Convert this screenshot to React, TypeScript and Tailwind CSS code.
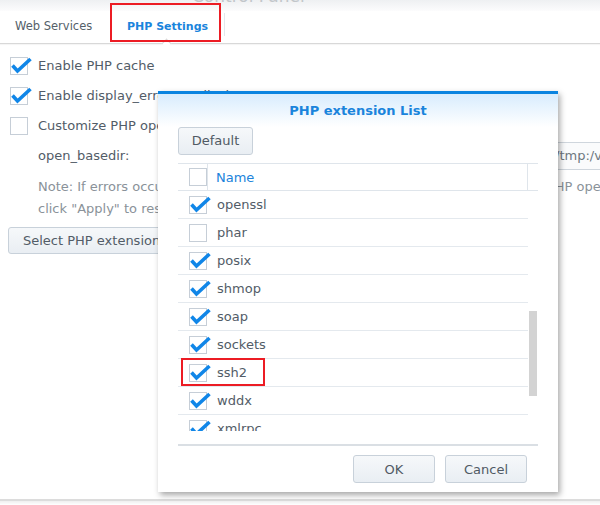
import React from "react";

function Check({ checked }: { checked: boolean }) {
  return (
    <div className="relative w-[18px] h-[18px] border border-[#c6ced7] bg-white shrink-0">
      {checked && (
        <svg
          className="absolute left-[-1px] top-[-1px] overflow-visible"
          width="20"
          height="20"
          viewBox="0 0 20 20"
        >
          <path d="M2.5 8.5 L7.5 14 L20.5 2" fill="none" stroke="#1086e8" strokeWidth="3.6" strokeLinejoin="miter" />
        </svg>
      )}
    </div>
  );
}

const rows: [string, boolean][] = [
  ["openssl", true],
  ["phar", false],
  ["posix", true],
  ["shmop", true],
  ["soap", true],
  ["sockets", true],
  ["ssh2", true],
  ["wddx", true],
  ["xmlrpc", true],
];

function Btn({ children, className = "" }: { children: React.ReactNode; className?: string }) {
  return (
    <div
      className={
        "flex items-center justify-center h-[28px] rounded-[3px] border border-[#c8d1da] bg-gradient-to-b from-[#f6f8fa] to-[#e9eef3] text-[#505a64] text-[13px] " +
        className
      }
    >
      {children}
    </div>
  );
}

export default function App() {
  return (
    <div className="relative w-[600px] h-[505px] bg-white overflow-hidden flex flex-col font-['DejaVu_Sans',sans-serif] text-[13px] text-[#525c67]">
      {/* top strip */}
      <div className="h-[11px] overflow-hidden bg-gradient-to-b from-[#eef0f2] to-[#fcfcfd] shrink-0">
        <div className="pl-[192px] -mt-[14px] text-[17px] text-[#c2c6ca] leading-[20px]">Control Panel</div>
      </div>

      {/* tab bar */}
      <div className="h-[33px] flex border-b border-[#d8d8d8] shadow-[0_1px_1px_rgba(0,0,0,0.04)] shrink-0">
        <div className="w-[110px] pl-[15px] flex items-center text-[11.5px] text-[#555f69]">Web Services</div>
        <div className="relative w-[114px] pl-[17px] flex items-center text-[11px] font-bold text-[#1a84dc]">
          PHP Settings
          <div className="absolute left-[53px] bottom-[-4px] w-[7px] h-[7px] rotate-45 border-l border-t border-[#d8d8d8] bg-white" />
        </div>
        <div className="mt-[2px] mb-[7px] border-l border-[#e2e7ec]" />
      </div>

      {/* content */}
      <div className="pl-[10px] pt-[7px] flex flex-col">
        <div className="h-[30px] flex items-center gap-[10px]">
          <Check checked />
          <span>Enable PHP cache</span>
        </div>
        <div className="h-[30px] flex items-center gap-[10px]">
          <Check checked />
          <span className="whitespace-nowrap">Enable display_errors to display PHP error messages</span>
        </div>
        <div className="h-[30px] flex items-center gap-[10px]">
          <Check checked={false} />
          <span className="whitespace-nowrap">Customize PHP open_basedir</span>
        </div>
        <div className="mt-[1px] h-[28px] flex items-center pl-[28px]">
          <span className="w-[510px] shrink-0">open_basedir:</span>
          <div className="flex-1 h-[28px] border border-[#cfd6dd] border-r-0 bg-[#fafbfc] flex items-center pl-[6px] whitespace-nowrap overflow-hidden text-[#6d7780]">
            /tmp:/var/services/web
          </div>
        </div>
        <div className="mt-[6px] pl-[28px] flex leading-[22px] text-[#8a9299] whitespace-nowrap">
          <span className="w-[509px] shrink-0 overflow-hidden">Note: If errors occur after customizing the settings, please modify the</span>
          <span>PHP open_basedir</span>
        </div>
        <div className="pl-[28px] leading-[22px] text-[#8a9299] whitespace-nowrap">click "Apply" to restore the default settings.</div>
        <div className="mt-[7px] -ml-[2px] h-[27px] self-start flex items-center px-[14px] rounded-[3px] border border-[#c8d1da] bg-gradient-to-b from-[#f6f8fa] to-[#e9eef3] whitespace-nowrap">
          Select PHP extension
        </div>
      </div>

      <div className="flex-1" />
      <div className="h-[6px] border-t-2 border-[#dcdcdc] bg-gradient-to-b from-[#efefef] to-white shrink-0" />

      {/* red box around tab */}
      <div className="absolute left-[110px] top-[3px] w-[111px] h-[39px] border-2 border-[#ec1c24]" />

      {/* dialog */}
      <div className="absolute left-[158px] top-[91px] w-[400px] h-[401px] bg-white border-t-[3px] border-[#0a84e0] shadow-[2px_3px_6px_rgba(0,0,0,0.35)] flex flex-col">
        <div className="h-[33px] shrink-0 bg-gradient-to-b from-[#d8ecfd] to-white flex items-center justify-center font-bold text-[13px] text-[#1a84dc]">
          PHP extension List
        </div>
        <div className="pl-[20px] shrink-0">
          <Btn className="w-[75px]">Default</Btn>
        </div>
        <div className="mt-[8px] ml-[20px] w-[360px] flex flex-col">
          <div className="h-[28px] flex border-t border-b border-[#dfe5eb]">
            <div className="w-[30px] pl-[11px] flex items-center border-r border-[#dfe5eb]">
              <Check checked={false} />
            </div>
            <div className="w-[320px] pl-[8px] pt-[2px] flex items-center text-[#2083db] border-r border-[#dfe5eb]">Name</div>
          </div>
          <div className="h-[240px] flex overflow-hidden">
            <div className="w-[350px] flex flex-col">
              {rows.map(([n, c]) => (
                <div key={n} className="h-[28px] shrink-0 flex items-center border-b border-[#e4e9ee]">
                  <div className="w-[30px] pl-[11px] flex items-center">
                    <Check checked={c} />
                  </div>
                  <span className="pl-[9px]">{n}</span>
                </div>
              ))}
            </div>
            <div className="w-[10px] pl-[1px] pt-[120px]">
              <div className="w-[8px] h-[85px] bg-[#d3d3d3]" />
            </div>
          </div>
          <div className="h-[15px] border-b-2 border-[#dadfe4]" />
        </div>
        <div className="mt-[9px] pr-[31px] flex justify-end gap-[10px]">
          <Btn className="w-[82px] h-[27px] pt-[1px]">OK</Btn>
          <Btn className="w-[82px] h-[27px] pt-[1px]">Cancel</Btn>
        </div>
      </div>

      {/* red box around ssh2 */}
      <div className="absolute left-[181px] top-[358px] w-[84px] h-[28px] border-2 border-[#ec1c24]" />
    </div>
  );
}
